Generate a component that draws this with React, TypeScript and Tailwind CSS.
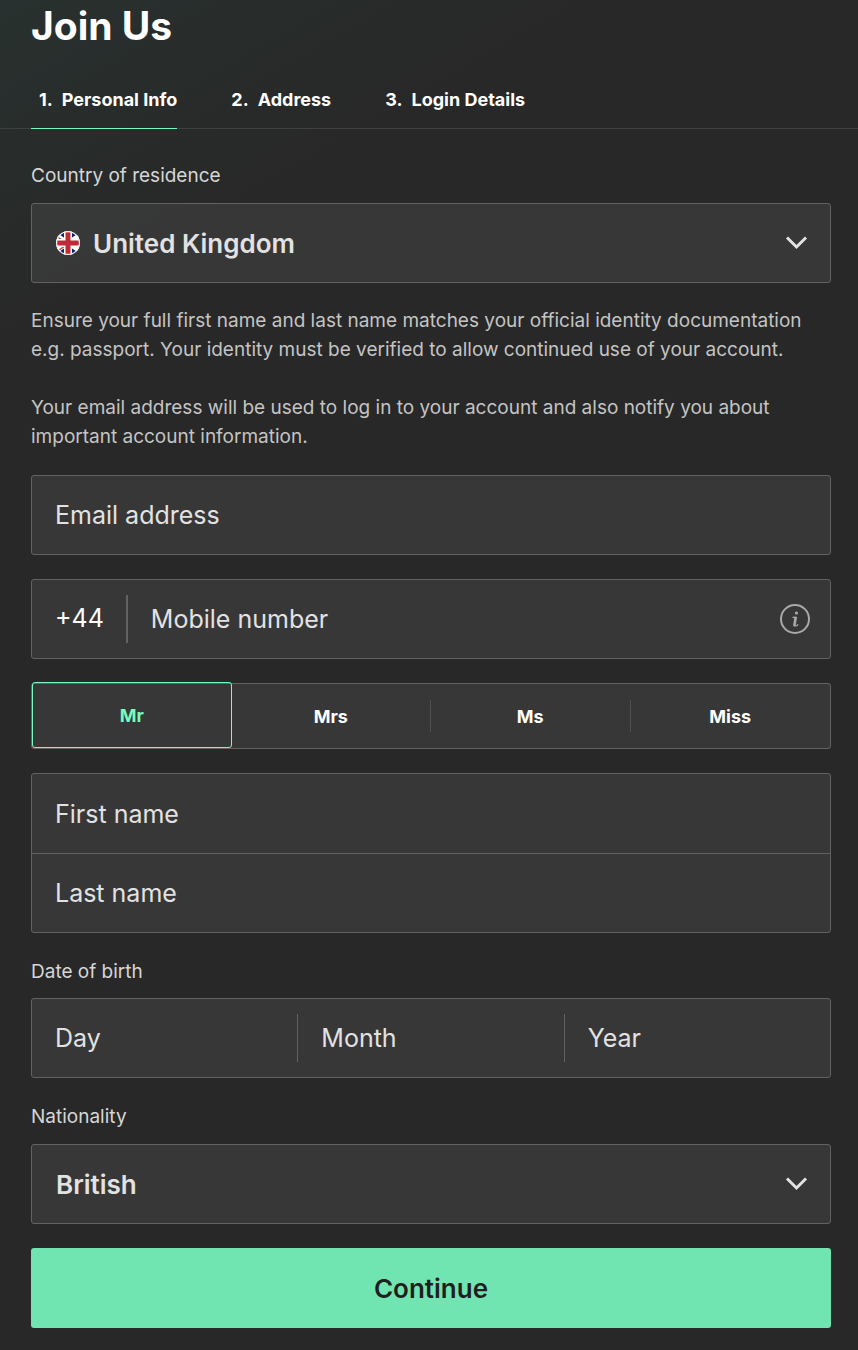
import { useState } from "react";
import clsx from "clsx";

const steps = ["Personal Info", "Address", "Login Details"];
const titles = ["Mr", "Mrs", "Ms", "Miss"];
const countries = ["United Kingdom", "Ireland", "Canada"];
const nationalities = ["British", "Irish", "Canadian"];

const box = "rounded-[3px] border border-[#626262] bg-[#ffffff12]";
const field =
  "w-full min-w-0 bg-transparent text-[#e2e2e2] outline-none placeholder:text-[#e2e2e2] placeholder:opacity-100";
const textField = `${field} h-[78px] px-[23px] text-[25px]`;
const selectField = `${field} h-[78px] appearance-none pr-6 text-[26px] font-semibold`;

function Chevron() {
  return (
    <svg
      viewBox="0 0 24 24"
      fill="none"
      stroke="currentColor"
      strokeWidth={3}
      className="pointer-events-none absolute right-[22px] h-6 w-6 text-[#e2e2e2]"
    >
      <path d="M3 6.500 12.500 16 22 6.500" />
    </svg>
  );
}

function UkFlag() {
  return (
    <svg viewBox="0 0 24 24" className="pointer-events-none absolute left-6 h-6 w-6">
      <defs>
        <clipPath id="flag-clip">
          <circle cx="12" cy="12" r="12" />
        </clipPath>
      </defs>
      <g clipPath="url(#flag-clip)">
        <path fill="#0a2472" d="M0 0h24v24H0z" />
        <path stroke="#fff" strokeWidth={4.5} d="M-3 2 27 22M27 2-3 22" />
        <path stroke="#c5303a" strokeWidth={1.2} d="M-3 3 12 13M12 13-3 23" />
        <path stroke="#fff" strokeWidth={8} d="M12 0v24M0 12h24" />
        <path stroke="#bf2a38" strokeWidth={5} d="M12 0v24M0 12h24" />
      </g>
      <circle cx="12" cy="12" r="11.400" fill="none" stroke="#f4f4f4" strokeWidth={1.2} />
    </svg>
  );
}

function InfoIcon() {
  return (
    <svg viewBox="0 0 30 30" fill="none" stroke="currentColor" className="h-[30px] w-[30px]">
      <circle cx="15" cy="15" r="14" strokeWidth={2} />
      <circle cx="16.500" cy="9" r="1.600" fill="currentColor" stroke="none" />
      <path strokeWidth={1.2} d="M12.500 13.300h3M13.500 22h2.500q1.500 0 2-1.800" />
      <path strokeWidth={2.600} d="M15.800 12.800 14.300 22" />
    </svg>
  );
}

function Divider() {
  return <span className="h-12 w-px shrink-0 bg-[#626262]" />;
}

export default function App() {
  const [step, setStep] = useState(0);
  const [title, setTitle] = useState("Mr");

  return (
    <div className="min-h-screen bg-[#282828] bg-[linear-gradient(150deg,#28312f,#282828_290px)] pb-[22px] font-['Inter',sans-serif] text-[#d6d6d6]">
      <header className="border-b border-[#404040] pr-[27px] pl-[31px]">
        <h1 className="pt-0.5 text-[39px] leading-[48px] font-bold text-white">Join Us</h1>
        <nav className="-mb-px flex gap-[46px] pt-[21px]">
          {steps.map((name, i) => (
            <button
              key={name}
              type="button"
              onClick={() => setStep(i)}
              className={clsx(
                "flex h-[58px] items-center gap-[9px] border-b pl-2 text-[18px] font-bold text-white",
                i === step ? "border-[#76fbbe]" : "border-transparent",
              )}
            >
              <span>{i + 1}.</span>
              <span>{name}</span>
            </button>
          ))}
        </nav>
      </header>

      <form className="pt-8 pr-[27px] pl-[31px]" onSubmit={(e) => e.preventDefault()}>
        <label htmlFor="country" className="block pb-3 text-[19px] leading-[30px]">
          Country of residence
        </label>
        <div className={`relative flex items-center ${box}`}>
          <UkFlag />
          <select id="country" className={`${selectField} pl-[61px]`}>
            {countries.map((c) => (
              <option key={c}>{c}</option>
            ))}
          </select>
          <Chevron />
        </div>

        <div className="flex flex-col gap-[29px] pt-[23px] pb-6 text-[19px] leading-[29px] text-[#c4c4c4]">
          <p>
            Ensure your full first name and last name matches your official identity documentation
            e.g. passport. Your identity must be verified to allow continued use of your account.
          </p>
          <p>
            Your email address will be used to log in to your account and also notify you about
            important account information.
          </p>
        </div>

        <div className="flex flex-col gap-6">
          <div className={box}>
            <input type="email" aria-label="Email address" placeholder="Email address" className={textField} />
          </div>

          <div className={`flex items-center ${box}`}>
            <span className="pr-[22px] pl-[23px] text-[25px] text-white">+44</span>
            <span className="h-12 w-0.5 shrink-0 bg-[#626262]" />
            <input type="tel" aria-label="Mobile number" placeholder="Mobile number" className={textField} />
            <button type="button" aria-label="About your mobile number" className="mr-5 text-[#a9a9a9]">
              <InfoIcon />
            </button>
          </div>

          <fieldset aria-label="Title" className={`grid grid-cols-4 ${box}`}>
            {titles.map((t, i) => (
              <label
                key={t}
                className={clsx(
                  "flex cursor-pointer items-center text-[18px] font-bold",
                  t === title
                    ? "-mt-0.5 h-[66px] rounded-[3px] border border-[#76fbbe] text-[#76fbbe]"
                    : "h-16 text-white",
                )}
              >
                <input
                  type="radio"
                  name="title"
                  value={t}
                  checked={t === title}
                  onChange={() => setTitle(t)}
                  className="sr-only"
                />
                <span className="grow text-center">{t}</span>
                {t !== title && i < titles.length - 1 && <span className="h-8 w-px bg-[#505050]" />}
              </label>
            ))}
          </fieldset>

          <div className={`divide-y divide-[#626262] ${box}`}>
            <input
              aria-label="First name"
              placeholder="First name"
              className={`${field} block h-20 px-[23px] text-[25px]`}
            />
            <input aria-label="Last name" placeholder="Last name" className={`${textField} block`} />
          </div>

          <fieldset>
            <legend className="pb-[11px] text-[19px] leading-[30px]">Date of birth</legend>
            <div className={`flex items-center ${box}`}>
              <input aria-label="Day" placeholder="Day" className={textField} />
              <Divider />
              <input aria-label="Month" placeholder="Month" className={textField} />
              <Divider />
              <input aria-label="Year" placeholder="Year" className={textField} />
            </div>
          </fieldset>

          <div>
            <label htmlFor="nationality" className="block pb-3 text-[19px] leading-[30px]">
              Nationality
            </label>
            <div className={`relative flex items-center ${box}`}>
              <select id="nationality" className={`${selectField} pl-6`}>
                {nationalities.map((n) => (
                  <option key={n}>{n}</option>
                ))}
              </select>
              <Chevron />
            </div>
          </div>

          <button type="submit" className="h-20 rounded-[3px] bg-[#70e5b1] text-[26px] font-semibold text-[#1f1f1f]">
            Continue
          </button>
        </div>
      </form>
    </div>
  );
}
